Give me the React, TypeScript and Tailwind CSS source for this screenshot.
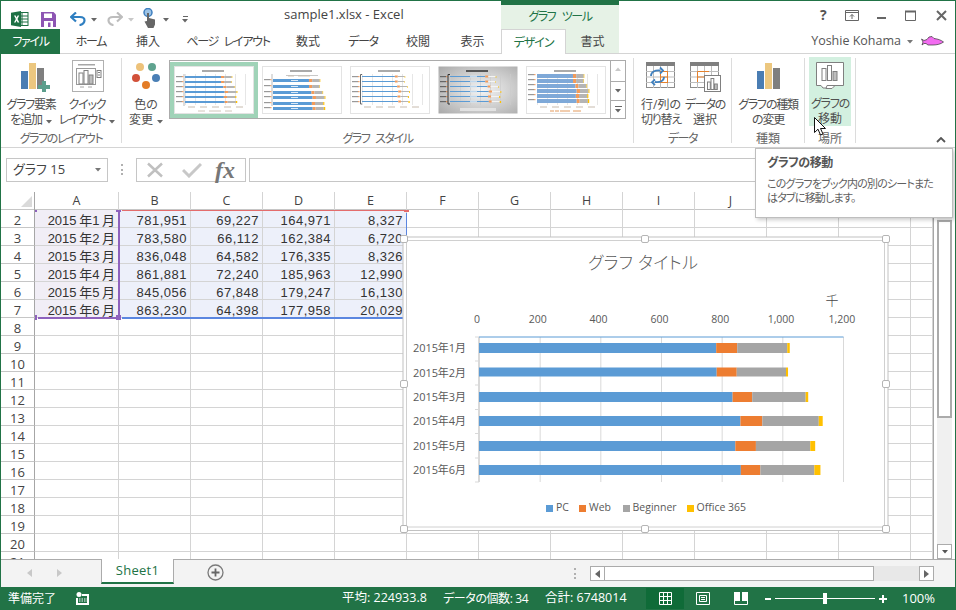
import React from "react";

const MONTHS = [
  { label: "2015年1月", cell: "2015 年1 月", pc: 781.951, web: 69.227, beg: 164.971, off: 8.327 },
  { label: "2015年2月", cell: "2015 年2 月", pc: 783.58, web: 66.112, beg: 162.384, off: 6.72 },
  { label: "2015年3月", cell: "2015 年3 月", pc: 836.048, web: 64.582, beg: 176.335, off: 8.326 },
  { label: "2015年4月", cell: "2015 年4 月", pc: 861.881, web: 72.24, beg: 185.963, off: 12.99 },
  { label: "2015年5月", cell: "2015 年5 月", pc: 845.056, web: 67.848, beg: 179.247, off: 16.13 },
  { label: "2015年6月", cell: "2015 年6 月", pc: 863.23, web: 64.398, beg: 177.958, off: 20.029 },
];
const fmt = (n: number) => Math.round(n * 1000).toLocaleString("en-US");
const COLS = ["A", "B", "C", "D", "E", "F", "G", "H", "I", "J", "K", "L", ""];
const GRID = "grid grid-cols-[34px_84px_repeat(11,72px)_1fr]";

function ExcelIcon() {
  return (
    <svg width="18" height="16" viewBox="0 0 18 16">
      <rect x="6" y="1.5" width="11" height="13" fill="#fff" stroke="#1e7145" />
      <path d="M11 2v12M6 5h11M6 8h11M6 11h11" stroke="#1e7145" strokeWidth="1" />
      <path d="M0 1.8 10 0v16L0 14.2z" fill="#1e7145" />
      <path d="M3 4.5h1.7l.9 2 1-2h1.6L6.5 8l1.8 3.5H6.6l-1-2.1-1 2.1H3L4.8 8z" fill="#fff" />
    </svg>
  );
}
function SaveIcon() {
  return (
    <svg width="15" height="15" viewBox="0 0 15 15">
      <path d="M0 0h12.5L15 2.5V15H0z" fill="#8d55b3" />
      <rect x="3" y="1.5" width="8" height="4.5" fill="#fff" />
      <rect x="3" y="9" width="9" height="6" fill="#fff" />
      <rect x="7" y="10.5" width="2.5" height="4.5" fill="#8d55b3" />
    </svg>
  );
}
function UndoArrow({ color, flip }: { color: string; flip?: boolean }) {
  return (
    <svg width="16" height="14" viewBox="0 0 16 14" style={flip ? { transform: "scaleX(-1)" } : undefined}>
      <path d="M2 5h8c3.5 0 4.5 2 4.5 3.5S13 13 9.5 13" fill="none" stroke={color} strokeWidth="2.2" />
      <path d="M6 0.5 1 5l5 4.5" fill="none" stroke={color} strokeWidth="2.2" />
    </svg>
  );
}
function TouchIcon() {
  return (
    <svg width="14" height="20" viewBox="0 0 14 20">
      <circle cx="5" cy="4.5" r="4" fill="#9cc3e6" stroke="#3f7fbf" strokeWidth="1.5" />
      <path d="M4 5h2v5l6 1.5v5L10.5 20H5L1.5 13.5 4 13z" fill="#666" />
    </svg>
  );
}
function Caret({ color = "#666" }: { color?: string }) {
  return (
    <svg width="6" height="4" viewBox="0 0 6 4" className="inline-block">
      <path d="M0 0h6L3 3.5z" fill={color} />
    </svg>
  );
}
function ElementIcon() {
  return (
    <svg width="29" height="29" viewBox="0 0 29 29" className="ml-[8px] mt-[2px]">
      <rect x="0" y="8" width="7" height="18" fill="#4a7db3" />
      <rect x="8" y="0" width="7" height="26" fill="#ecc77f" />
      <rect x="16" y="5" width="7" height="21" fill="#7f7f7f" />
      <path d="M17 22h4v-4h4v4h4v4h-4v3h-4v-3h-4z" fill="#5c9e8c" />
    </svg>
  );
}
function TypeIcon() {
  return (
    <svg width="23" height="26" viewBox="0 0 23 26" className="mt-[2px]">
      <rect x="0" y="8" width="7" height="18" fill="#4a7db3" />
      <rect x="8" y="0" width="7" height="26" fill="#ecc77f" />
      <rect x="16" y="5" width="7" height="21" fill="#7f7f7f" />
    </svg>
  );
}
function QuickIcon() {
  return (
    <svg width="32" height="32" viewBox="0 0 32 32" className="ml-[2px] -mt-[1px]">
      <rect x="0.5" y="0.5" width="31" height="31" fill="#fff" stroke="#b0b0b0" />
      <rect x="6" y="4" width="17" height="1.5" fill="#a6a6a6" />
      <rect x="4.5" y="8.5" width="19" height="16" fill="none" stroke="#9a9a9a" />
      <rect x="7" y="13" width="4" height="11" fill="#fff" stroke="#808080" />
      <rect x="12" y="10.5" width="4" height="13.5" fill="#fff" stroke="#808080" />
      <rect x="17" y="15" width="4" height="9" fill="#bdbdbd" stroke="#808080" />
      <rect x="25" y="10.5" width="4" height="7" fill="#fff" stroke="#808080" />
      <path d="M26 12.5h2M26 15h2" stroke="#808080" />
      <path d="M8 27h4M16 27h4" stroke="#a6a6a6" />
    </svg>
  );
}
function ColorIcon() {
  return (
    <svg width="32" height="30" viewBox="0 0 32 30">
      <circle cx="10" cy="6" r="4" fill="#edc27a" />
      <circle cx="22" cy="6" r="4" fill="#5fa38f" />
      <circle cx="6" cy="17" r="4" fill="#d2513a" />
      <circle cx="26" cy="17" r="4" fill="#4a7fb5" />
      <circle cx="16" cy="24" r="4" fill="#e37c26" />
    </svg>
  );
}
function TableBase() {
  return (
    <>
      <rect x="0.5" y="0.5" width="28" height="25" fill="#fff" stroke="#8c8c8c" />
      <rect x="0" y="0" width="29" height="4" fill="#7f7f7f" />
      <path d="M0 9.5h29M0 15h29M0 20.5h29M7.5 4v22M14.5 4v22M21.5 4v22" stroke="#bdbdbd" />
    </>
  );
}
function SwitchIcon() {
  return (
    <svg width="30" height="27" viewBox="0 0 30 27" className="mt-[1px]">
      <TableBase />
      <rect x="14.5" y="9.5" width="7" height="11" fill="none" stroke="#e5812c" />
      <path d="M14.5 15h7" stroke="#e5812c" />
      <path d="M5 14c0-4 4-6 9-5.500M14 5.500l3 3-3 3M18 15c0 4-4 5.500-9 5M9 17.500l-3 2.700 3 3" fill="none" stroke="#3f80bf" strokeWidth="1.8" />
    </svg>
  );
}
function SelectIcon() {
  return (
    <svg width="31" height="30" viewBox="0 0 31 30" className="mt-[1px]">
      <TableBase />
      <path d="M7.5 9.5H19M7.5 15H19M7.5 9.5V20" stroke="#e5812c" fill="none" />
      <rect x="14.5" y="13.5" width="16" height="16" fill="#fff" stroke="#808080" />
      <rect x="17.5" y="20" width="2.8" height="7.5" fill="#fff" stroke="#808080" />
      <rect x="21" y="16.5" width="2.8" height="11" fill="#fff" stroke="#808080" />
      <rect x="24.5" y="22" width="2.8" height="5.5" fill="#bdbdbd" stroke="#808080" />
    </svg>
  );
}
function MoveIcon() {
  return (
    <svg width="28" height="27" viewBox="0 0 28 27" className="mt-[2px]">
      <path d="M0.5 0.5h27v23H14l-2 2.5H7l-2-2.500H0.5z" fill="#fff" stroke="#7f7f7f" />
      <path d="M11 23.5h8l-3 3h-6z" fill="#fff" stroke="#7f7f7f" />
      <rect x="6" y="6.5" width="4" height="12" fill="#fff" stroke="#808080" />
      <rect x="11.5" y="3.5" width="4" height="15" fill="#fff" stroke="#808080" />
      <rect x="17" y="9.5" width="4" height="9" fill="#bdbdbd" stroke="#808080" />
    </svg>
  );
}

const PLAIN = /^(色の|変更|行\/列の|選択|移動)$/;

function Btn({ w, icon, lines, caret }: { w: string; icon: React.ReactNode; lines: string[]; caret?: boolean }) {
  return (
    <div className={`${w} flex flex-col items-center`}>
      <div className="flex h-[39px] items-start justify-center pt-[3px]">{icon}</div>
      {lines.map((l, i) => (
        <div key={l} className={`h-[15px] whitespace-nowrap text-[12px] leading-[15px] text-[#505050] ${PLAIN.test(l) ? "" : "tracking-[-1.2px]"}`}>
          {l}
          {caret && i === 1 && (
            <span className="ml-[4px] align-middle"><Caret /></span>
          )}
        </div>
      ))}
    </div>
  );
}

function GroupLabel({ children, tight }: { children: React.ReactNode; tight?: boolean }) {
  return <div className={`flex h-[18px] shrink-0 items-center justify-center pt-[2px] text-[12px] text-[#666] [word-spacing:4px] ${tight ? "tracking-[-1.4px]" : ""}`}>{children}</div>;
}

function Thumb({ kind }: { kind: "a" | "b" | "c" | "d" | "e" }) {
  const ys = kind === "b" ? [13, 19, 25, 30, 36, 41] : kind === "e" ? [8, 13, 18, 23, 28, 33] : [10, 15, 20, 25, 30, 35];
  const h = kind === "b" ? 3 : kind === "a" ? 2 : kind === "e" ? 4 : 1;
  const x0 = kind === "d" || kind === "c" ? 12 : 11;
  const scale = kind === "c" ? 0.042 : kind === "d" ? 0.045 : 0.046;
  const gridOp = kind === "b" ? 0 : 1;
  return (
    <svg width="80" height="48" viewBox="0 0 80 48" className="block">
      <defs>
        <radialGradient id="thumbgrey" cx="55%" cy="50%" r="75%">
          <stop offset="0%" stopColor="#f5f5f5" />
          <stop offset="100%" stopColor="#a8a8a8" />
        </radialGradient>
      </defs>
      <rect x="0.5" y="0.5" width="79" height="47" fill={kind === "d" ? "url(#thumbgrey)" : "#fff"} stroke={kind === "d" ? "none" : "#e3e3e3"} />
      <rect x="28" y="4" width="22" height="2" fill={kind === "d" ? "#555" : "#aaa"} />
      {kind === "b" && <rect x="24" y="9" width="32" height="1" fill="#c8c8c8" />}
      {gridOp > 0 && [0, 1, 2, 3, 4, 5, 6].map((i) => (
        <rect key={i} x={x0 + i * 10} y="8" width="0.7" height="31" fill={kind === "d" ? "#ccc" : "#dcdcdc"} />
      ))}
      {MONTHS.map((m, i) => {
        const pc = m.pc * scale;
        const web = m.web * scale;
        const beg = m.beg * scale;
        const off = m.off * scale * 1.5;
        return (
          <g key={m.label}>
            <rect x={2} y={ys[i]} width="6" height="1.2" fill={kind === "d" ? "#666" : "#999"} />
            <rect x={8} y={ys[i]} width="1.5" height="1.2" fill="#ed7d31" opacity="0.7" />
            <rect x={x0} y={ys[i]} width={pc} height={h} fill={kind === "e" ? "#7fa9d8" : "#5b9bd5"} />
            <rect x={x0 + pc} y={ys[i] - (kind === "c" || kind === "d" ? 0.5 : 0)} width={web} height={Math.max(h, 2)} fill="#f29b5a" />
            <rect x={x0 + pc + web} y={ys[i]} width={beg} height={h} fill={kind === "d" ? "#f4f4f4" : "#b5b5b5"} />
            <rect x={x0 + pc + web + beg} y={ys[i]} width={off} height={Math.max(h, 2)} fill="#ffc000" />
            {kind === "b" && <rect x={x0 + 18} y={ys[i] + 1} width="7" height="1" fill="#dbe9f6" />}
            {kind === "d" && <rect x={x0 + 20} y={ys[i] - 0.5} width="7" height="2" fill="#d7e6f3" opacity="0.8" />}
          </g>
        );
      })}
      {(kind === "a" || kind === "c" || kind === "e") && (
        <path d="M14 41h7M26 41h7M38 41h7M50 41h7M62 41h7" stroke="#b9a99a" strokeWidth="0.8" />
      )}
      {kind === "a" && <path d="M24 45h7M35 45h12M51 45h7" stroke="#c4b8a8" strokeWidth="0.8" />}
      {kind === "b" && <path d="M26 10h6M36 10h12" stroke="#c4b8a8" strokeWidth="0.8" />}
      {kind === "d" && <rect x="22" y="42" width="36" height="3" fill="#e8e8e8" opacity="0.8" />}
      {kind === "e" && <path d="M24 45h4M29 45h4M34 45h10M47 45h8" stroke="#e39a5c" strokeWidth="1" />}
      {(kind === "a" || kind === "b") && <rect x="9.5" y="8" width="1" height="32" fill="#bbb" />}
      {kind === "d" && <path d="M12 8.5h-2V38h2" fill="none" stroke="#333" />}
      {kind === "c" && <path d="M12 8.5h-1.5V38H12" fill="none" stroke="#666" />}
    </svg>
  );
}

function Ribbon() {
  const sep = "border-r border-[#dcdcdc]";
  return (
    <div className="flex h-[94px] shrink-0 border-b border-[#d4d4d4] bg-white">
      <div className="pt-[4px]">
        <div className={`flex h-[85px] w-[121px] flex-col ${sep}`}>
          <div className="flex h-[71px] shrink-0 gap-[2px] pl-[3px]">
            <Btn w="w-[54px]" icon={<ElementIcon />} lines={["グラフ要素", "を追加"]} caret />
            <Btn w="w-[54px]" icon={<QuickIcon />} lines={["クイック", "レイアウト"]} caret />
          </div>
          <GroupLabel tight>グラフのレイアウト</GroupLabel>
        </div>
      </div>
      <div className="pt-[4px]">
        <div className={`flex h-[85px] w-[512px] flex-col ${sep}`}>
          <div className="flex h-[71px] shrink-0 pl-[4px]">
            <Btn w="w-[40px]" icon={<ColorIcon />} lines={["色の", "変更"]} caret />
            <div className="ml-[3px] mt-[2px] flex h-[59px] w-[457px] border border-[#ababab]">
              <div className="ml-0 mt-px h-[56px] w-[88px] shrink-0 border-[4px] border-[#a0d3b8] bg-white">
                <Thumb kind="a" />
              </div>
              <div className="ml-[4px] mt-[5px] flex gap-[8px]">
                <Thumb kind="b" />
                <Thumb kind="c" />
                <Thumb kind="d" />
                <Thumb kind="e" />
              </div>
              <div className="ml-auto flex w-[15px] flex-col border-l border-[#ababab] text-[#777]">
                <div className="flex h-[21px] items-center justify-center border-b border-[#ababab]">
                  <span className="rotate-180 leading-none"><Caret color="#c8c8c8" /></span>
                </div>
                <div className="flex h-[19px] items-center justify-center border-b border-[#ababab]"><Caret color="#666" /></div>
                <div className="flex flex-1 flex-col items-center justify-center gap-[2px]">
                  <div className="h-px w-[7px] bg-[#666]" />
                  <Caret color="#666" />
                </div>
              </div>
            </div>
          </div>
          <GroupLabel tight>グラフ スタイル</GroupLabel>
        </div>
      </div>
      <div className="pt-[4px]">
        <div className={`flex h-[85px] w-[98px] flex-col ${sep}`}>
          <div className="flex h-[71px] shrink-0 gap-[2px] pl-[6px]">
            <Btn w="w-[42px]" icon={<SwitchIcon />} lines={["行/列の", "切り替え"]} />
            <Btn w="w-[42px]" icon={<SelectIcon />} lines={["データの", "選択"]} />
          </div>
          <GroupLabel tight>データ</GroupLabel>
        </div>
      </div>
      <div className="pt-[4px]">
        <div className={`flex h-[85px] w-[73px] flex-col ${sep}`}>
          <div className="flex h-[71px] shrink-0 justify-center">
            <Btn w="w-[70px]" icon={<TypeIcon />} lines={["グラフの種類", "の変更"]} />
          </div>
          <GroupLabel>種類</GroupLabel>
        </div>
      </div>
      <div className="pt-[4px]">
        <div className={`flex h-[85px] w-[51px] flex-col ${sep}`}>
          <div className="flex h-[71px] shrink-0 pl-[4px]">
            <div className="-mt-px h-[69px] w-[42px] bg-[#d3f0e0]">
              <Btn w="w-[42px]" icon={<MoveIcon />} lines={["グラフの", "移動"]} />
            </div>
          </div>
          <GroupLabel>場所</GroupLabel>
        </div>
      </div>
      <div className="flex flex-1 items-end justify-end pb-[4px] pr-[9px]">
        <svg width="10" height="6" viewBox="0 0 10 6"><path d="M1 5l4-4 4 4" fill="none" stroke="#555" strokeWidth="1.8" /></svg>
      </div>
    </div>
  );
}

function Dots({ className }: { className: string }) {
  return (
    <div className={`flex h-[11px] w-[3px] flex-col justify-between ${className}`}>
      <div className="h-[2px] w-[2px] bg-[#b0b0b0]" />
      <div className="h-[2px] w-[2px] bg-[#b0b0b0]" />
      <div className="h-[2px] w-[2px] bg-[#b0b0b0]" />
    </div>
  );
}

function FormulaBar() {
  return (
    <div className="flex h-[44px] shrink-0 items-start bg-white pt-[10px]">
      <div className="ml-[5px] flex h-[24px] w-[102px] items-center justify-between border border-[#c6c6c6] px-[6px] text-[13px] text-[#444]">
        <span>グラフ 15</span>
        <Caret color="#777" />
      </div>
      <Dots className="ml-[13px] mt-[6px]" />
      <div className="ml-[12px] flex h-[24px] w-[110px] items-center border border-[#c6c6c6]">
        <svg width="20" height="16" viewBox="0 0 20 16" className="ml-[8px]"><path d="M3 1.5l14 13M17 1.5L3 14.5" stroke="#c0c0c0" strokeWidth="2.5" /></svg>
        <svg width="20" height="16" viewBox="0 0 20 16" className="ml-[17px]"><path d="M1 8l6 6L19 2" fill="none" stroke="#c8c8c8" strokeWidth="3" /></svg>
        <span className="ml-[13px] text-[24px] font-bold italic leading-none text-[#777] [font-family:'Liberation_Serif',serif]">fx</span>
      </div>
      <div className="ml-[3px] mr-[3px] h-[24px] flex-1 border border-[#c6c6c6]" />
    </div>
  );
}

function Sheet() {
  const rows = Array.from({ length: 20 }, (_, i) => i + 2);
  return (
    <div className="relative flex h-[367px] shrink-0 bg-white">
      <div className="w-[933px] shrink-0 overflow-hidden border-r border-[#a6a6a6]">
        <div className={`${GRID} h-[18px] border-b border-[#c6c6c6]`}>
          <div className="relative border-r border-[#a6a6a6]">
            <svg width="11" height="11" viewBox="0 0 11 11" className="absolute left-[20px] top-[4px]"><path d="M11 0v11H0z" fill="#dadada" /></svg>
          </div>
          {COLS.map((c, i) => (
            <div key={i} className="flex items-center justify-center border-r border-[#d4d4d4] text-[12.5px] text-[#444]">{c}</div>
          ))}
        </div>
        {rows.map((r) => {
          const m = MONTHS[r - 2];
          return (
            <div key={r} className={`${GRID} ${r === 21 ? "h-[7px] overflow-hidden" : "h-[18px]"}`}>
              <div className="flex h-[18px] items-center justify-center border-b border-r border-[#c6c6c6] border-r-[#a6a6a6] pt-[3px] text-[13px] leading-none text-[#444]">{r}</div>
              {COLS.map((_, i) => {
                const bg = m ? (i === 0 ? "bg-[#f1eef6]" : i <= 4 ? "bg-[#edf0fa]" : "") : "";
                const text = m ? [m.cell, fmt(m.pc), fmt(m.web), fmt(m.beg), fmt(m.off)][i] : "";
                return (
                  <div key={i} className={`overflow-hidden whitespace-nowrap border-b border-r border-[#d4d4d4] pr-[3px] text-right text-[13px] leading-[21px] text-[#333] [font-family:'Liberation_Sans','Noto_Sans_CJK_JP',sans-serif] [font-feature-settings:normal] ${i === 0 ? "[word-spacing:-1px]" : "tracking-[0.5px]"} ${bg}`}>
                    {text}
                  </div>
                );
              })}
            </div>
          );
        })}
      </div>
      <div className="flex flex-1 flex-col pl-[3px] pr-[3px]">
        <div className="flex flex-1 flex-col bg-[#f0f0f0]">
          <div className="mt-[28px] h-[198px] border-2 border-[#ababab] bg-white" />
          <div className="mt-auto flex h-[15px] items-center justify-center border border-[#ababab] bg-white"><Caret color="#555" /></div>
        </div>
      </div>

      <div className="absolute left-[34px] top-[18px] h-[2px] w-[2px] bg-[#8e62bd]" />
      <div className="absolute left-[34px] top-[123px] h-[5px] w-[2px] bg-[#8e62bd]" />
      <div className="absolute left-[37px] top-[125px] h-[2px] w-[79px] bg-[#8e62bd]" />
      <div className="absolute left-[117px] top-[18px] h-[107px] w-[2px] bg-[#8e62bd]" />
      <div className="absolute left-[115px] top-[18px] h-[2px] w-[5px] bg-[#8e62bd]" />
      <div className="absolute left-[115px] top-[123px] h-[5px] w-[5px] bg-[#8e62bd]" />
      <div className="absolute left-[121px] top-[18px] h-px w-[284px] bg-[#e46c6c]" />
      <div className="absolute left-[403px] top-[18px] h-[2px] w-[5px] bg-[#e46c6c]" />
      <div className="absolute left-[405px] top-[21px] h-[22px] w-px bg-[#5b86e0]" />
      <div className="absolute left-[121px] top-[125px] h-[2px] w-[282px] bg-[#5b86e0]" />

      <Chart />
    </div>
  );
}

function Handle({ x, y }: { x: number; y: number }) {
  return <rect x={x - 3.5} y={y - 3.5} width="7" height="7" rx="1.5" fill="#fff" stroke="#b5b5b5" />;
}

function Chart() {
  const x0 = 479;
  const k = (843 - 479) / 1200;
  const ys = [343, 367.5, 392, 416, 441, 465];
  const ticks = [337, 361, 385, 409.5, 433.5, 458, 482];
  return (
    <svg width="492" height="300" viewBox="400 235 492 300" className="absolute left-[399px] top-[43px]">
      <rect x="403" y="237" width="485" height="293.5" fill="#fff" stroke="#c2c2c2" />
      <rect x="406.5" y="240.5" width="478" height="286.5" fill="#fff" stroke="#d0d0d0" />
      <Handle x={404} y={239} />
      <Handle x={645} y={239} />
      <Handle x={886} y={239} />
      <Handle x={404} y={384} />
      <Handle x={886} y={384} />
      <Handle x={404} y={529} />
      <Handle x={645} y={529} />
      <Handle x={886} y={529} />
      <text x="643" y="269" textAnchor="middle" fontSize="17" fill="#595959" fontWeight="300" textLength="110">グラフ タイトル</text>
      <text x="832" y="305" textAnchor="middle" fontSize="13" fontWeight="300" fill="#444">千</text>
      {[0, 200, 400, 600, 800, 1000, 1200].map((v, i) => (
        <g key={v}>
          <line x1={x0 + v * k + 0.5} x2={x0 + v * k + 0.5} y1="337" y2="482" stroke="#d9d9d9" />
          <text x={477 + i * 60.8} y="323" textAnchor="middle" fontSize="10.5" fill="#595959">{v.toLocaleString("en-US")}</text>
        </g>
      ))}
      <line x1={x0} x2="843.5" y1="337" y2="337" stroke="#5b9bd5" />
      <line x1="478.5" x2="478.5" y1="337" y2="482" stroke="#d9d9d9" />
      {ticks.map((t) => (
        <line key={t} x1="475" x2="479" y1={t} y2={t} stroke="#d9d9d9" />
      ))}
      {MONTHS.map((m, i) => {
        let x = x0;
        const segs: [number, string][] = [[m.pc, "#5b9bd5"], [m.web, "#ed7d31"], [m.beg, "#a5a5a5"], [m.off, "#ffc000"]];
        return (
          <g key={m.label}>
            <text x="413" y={ys[i] + 9} fontSize="11" fill="#595959" textLength="53">{m.label}</text>
            {segs.map(([v, c]) => {
              const w = v * k;
              const el = <rect key={c} x={x} y={ys[i]} width={w} height={i === 1 ? 9 : 10} fill={c} />;
              x += w;
              return el;
            })}
          </g>
        );
      })}
      <rect x="546" y="505" width="7" height="7" fill="#5b9bd5" />
      <text x="556" y="511" fontSize="10.5" fill="#595959">PC</text>
      <rect x="579" y="505" width="7" height="7" fill="#ed7d31" />
      <text x="589" y="511" fontSize="10.5" fill="#595959">Web</text>
      <rect x="623" y="505" width="7" height="7" fill="#a5a5a5" />
      <text x="632.5" y="511" fontSize="10.5" fill="#595959">Beginner</text>
      <rect x="687" y="505" width="7" height="7" fill="#ffc000" />
      <text x="696.5" y="511" fontSize="10.5" fill="#595959">Office 365</text>
    </svg>
  );
}

function SheetTabs() {
  return (
    <div className="flex h-[28px] shrink-0 items-start border-t border-[#ababab] bg-[#f3f3f3]">
      <svg width="6" height="8" viewBox="0 0 6 8" className="ml-[26px] mt-[9px]"><path d="M5 0v8L0 4z" fill="#c8c8c8" /></svg>
      <svg width="6" height="8" viewBox="0 0 6 8" className="ml-[23px] mt-[9px]"><path d="M1 0v8l5-4z" fill="#c8c8c8" /></svg>
      <div className="-mt-px ml-[39px] flex h-[25px] w-[73px] items-center justify-center border-x border-b-2 border-[#ababab] border-b-[#217346] bg-white text-[13px] tracking-[0.3px] text-[#217346]">Sheet1</div>
      <svg width="17" height="17" viewBox="0 0 17 17" className="ml-[33px] mt-[4px]">
        <circle cx="8.5" cy="8.5" r="7.5" fill="#f3f3f3" stroke="#7a7a7a" strokeWidth="1.3" />
        <path d="M8.5 4.5v8M4.5 8.5h8" stroke="#666" strokeWidth="1.8" />
      </svg>
      <Dots className="ml-[350px] mt-[8px]" />
      <div className="ml-[13px] mt-[6px] flex h-[15px] w-[344px] bg-[#e8e8e8]">
        <div className="flex w-[15px] items-center justify-center border border-[#ababab] bg-white">
          <svg width="5" height="8" viewBox="0 0 5 8"><path d="M5 0v8L0 4z" fill="#666" /></svg>
        </div>
        <div className="w-[269px] border border-l-0 border-[#ababab] bg-white" />
        <div className="ml-auto flex w-[15px] items-center justify-center border border-[#ababab] bg-white">
          <svg width="5" height="8" viewBox="0 0 5 8"><path d="M0 0v8l5-4z" fill="#666" /></svg>
        </div>
      </div>
    </div>
  );
}

function StatusBar() {
  return (
    <div className="flex h-[23px] shrink-0 items-center bg-[#217346] text-[12px] text-white">
      <span className="ml-[7px] w-[48px] whitespace-nowrap">準備完了</span>
      <svg width="13" height="13" viewBox="0 0 13 13" className="ml-[20px]">
        <circle cx="3" cy="2.5" r="2.5" fill="#fff" />
        <path d="M6 2h7v11H0V6h2v5h9V4H6z" fill="#fff" />
        <path d="M3 7h8M3 9h8" stroke="#fff" strokeDasharray="1.5 1" />
      </svg>
      <span className="ml-[253px] w-[86px] whitespace-nowrap text-[12.5px]">平均: 224933.8</span>
      <span className="ml-[15px] w-[86px] whitespace-nowrap tracking-[-0.4px]">データの個数: 34</span>
      <span className="ml-[16px] w-[82px] whitespace-nowrap text-[12.5px]">合計: 6748014</span>
      <div className="ml-[19px] flex h-[21px] w-[38px] items-center justify-center bg-[#0f6b38]">
        <svg width="13" height="13" viewBox="0 0 13 13"><path d="M.5.5h12v12H.5zM4.5.5v12M8.5.5v12M.5 4.5h12M.5 8.5h12" fill="none" stroke="#fff" /></svg>
      </div>
      <svg width="14" height="13" viewBox="0 0 14 13" className="ml-[12px]"><path d="M.5.5h13v12H.5zM3.5 3.5h7v6h-7zM5 5.5h4M5 7.5h4" fill="none" stroke="#fff" /></svg>
      <svg width="14" height="13" viewBox="0 0 14 13" className="ml-[24px]"><path d="M0 0h6v9H0zM8 0h6v9H8z" fill="#fff" /><path d="M.5 9v3.5h13V9" fill="none" stroke="#fff" /></svg>
      <div className="ml-[17px] h-[2px] w-[6px] bg-white" />
      <div className="relative ml-[4px] h-px w-[100px] bg-white">
        <div className="absolute left-[48px] top-[-5px] h-[11px] w-[4px] bg-white" />
      </div>
      <svg width="8" height="8" viewBox="0 0 8 8" className="ml-[4px]"><path d="M3 0h2v3h3v2H5v3H3V5H0V3h3z" fill="#fff" /></svg>
      <span className="ml-[15px] text-[13px]">100%</span>
    </div>
  );
}

export default function App() {
  return (
    <div className="relative flex h-[610px] w-[956px] flex-col overflow-hidden border-x border-t border-[#217346] bg-white text-[#444] [font-family:'Open_Sans','Noto_Sans_CJK_JP',sans-serif] [font-feature-settings:'palt']">
      {/* Title bar */}
      <div className="flex h-[28px] shrink-0 items-start">
        <div className="flex w-[283px] shrink-0 items-center pt-[5px]">
          <span className="ml-[10px]"><ExcelIcon /></span>
          <span className="ml-[12px]"><SaveIcon /></span>
          <span className="ml-[14px]"><UndoArrow color="#2f7fc1" /></span>
          <span className="ml-[5px] mb-[2px]"><Caret /></span>
          <span className="ml-[10px]"><UndoArrow color="#bdbdbd" flip /></span>
          <span className="ml-[5px] mb-[2px]"><Caret color="#c8c8c8" /></span>
          <span className="ml-[9px] -mt-[2px]"><TouchIcon /></span>
          <span className="ml-[6px] mb-[2px]"><Caret /></span>
          <span className="ml-[13px] flex flex-col items-center gap-[2px]">
            <span className="h-px w-[5px] bg-[#666]" />
            <Caret />
          </span>
        </div>
        <div className="flex h-[28px] w-[217px] shrink-0 items-center text-[13px] text-[#444]">sample1.xlsx - Excel</div>
        <div className="flex h-[28px] w-[118px] shrink-0 items-center justify-center border-t-4 border-[#217346] bg-[#e6f2e6] text-[12px] tracking-[-1.5px] text-[#217346] [word-spacing:5px]">グラフ ツール</div>
        <div className="flex flex-1 items-center justify-end gap-[15px] pr-[8px] pt-[7px] text-[#555]">
          <span className="w-[10px] text-[14px] font-bold leading-none">?</span>
          <svg width="14" height="11" viewBox="0 0 14 11"><path d="M.5.5h13v10H.5zM.5 2.5h13M7 9V4.5M5 6.5l2-2 2 2" fill="none" stroke="#666" /></svg>
          <svg width="13" height="11" viewBox="0 0 13 11" className="ml-[1px]"><rect x="2" y="7" width="9" height="2" fill="#666" /></svg>
          <svg width="13" height="11" viewBox="0 0 13 11" className="ml-[2px]"><path d="M.5 1.5h10v9H.5z" fill="none" stroke="#666" /><rect x="0" y="0.5" width="11" height="2" fill="#666" /></svg>
          <svg width="11" height="11" viewBox="0 0 11 11" className="ml-[3px]"><path d="M1 1l9 9M10 1l-9 9" stroke="#666" strokeWidth="2" /></svg>
        </div>
      </div>

      {/* Tabs */}
      <div className="flex h-[25px] shrink-0 border-b border-[#d4d4d4] text-[12px] text-[#444]">
        <div className="-mb-px flex w-[59px] items-center justify-center bg-[#217346] pt-px tracking-[-1.3px] text-white">ファイル</div>
        <div className="flex w-[62px] items-center justify-center pt-px tracking-[-1.3px]">ホーム</div>
        <div className="flex w-[52px] items-center justify-center pt-px">挿入</div>
        <div className="flex w-[108px] items-center justify-center pt-px tracking-[-1.3px] [word-spacing:4px]">ページ レイアウト</div>
        <div className="flex w-[52px] items-center justify-center pt-px">数式</div>
        <div className="flex w-[58px] items-center justify-center pt-px tracking-[-1.3px]">データ</div>
        <div className="flex w-[52px] items-center justify-center pt-px">校閲</div>
        <div className="flex w-[57px] items-center justify-center pt-px">表示</div>
        <div className="z-10 -mb-px flex w-[65px] items-center justify-center border-x border-t border-[#d4d4d4] bg-white pt-px tracking-[-1px] text-[#217346]">デザイン</div>
        <div className="flex w-[53px] items-center justify-center bg-[#e6f2e6] pt-px">書式</div>
        <div className="flex flex-1 items-center justify-end pr-[11px]">
          <span className="text-[12.5px] text-[#555]">Yoshie Kohama</span>
          <span className="ml-[6px]"><Caret color="#777" /></span>
          <svg width="23" height="10" viewBox="0 0 23 10" className="ml-[8px]">
            <path d="M0.5 3 3 4.500 6 3.500 8 1 11 .5 13 2.500C17 3 20 4 22.500 6 20 8 16 9 12 9L7 9 5 7.500 3 7.500 1 9 2 6z" fill="#f26cf0" stroke="#333" strokeWidth="0.7" />
          </svg>
        </div>
      </div>

      <Ribbon />
      <FormulaBar />
      <Sheet />
      <SheetTabs />
      <StatusBar />

      {/* Tooltip */}
      <div className="absolute left-[754px] top-[147px] h-[70px] w-[198px] border border-[#bebebe] bg-white px-[11px] pt-[6px] shadow-[2px_2px_4px_rgba(0,0,0,0.2)]">
        <div className="text-[12px] font-bold leading-[16px] tracking-[-0.5px] text-[#555]">グラフの移動</div>
        <div className="mt-[6px] whitespace-nowrap text-[11px] leading-[14px] tracking-[-0.8px] text-[#606060]">このグラフをブック内の別のシートまた<br />はタブに移動します。</div>
      </div>

      {/* Mouse pointer */}
      <svg width="13" height="19" viewBox="0 0 13 19" className="absolute left-[813px] top-[116px]">
        <path d="M.5.5v15l3.5-3.300 2.500 5.800 2.500-1-2.500-5.500h5z" fill="#fff" stroke="#111" />
      </svg>
    </div>
  );
}
